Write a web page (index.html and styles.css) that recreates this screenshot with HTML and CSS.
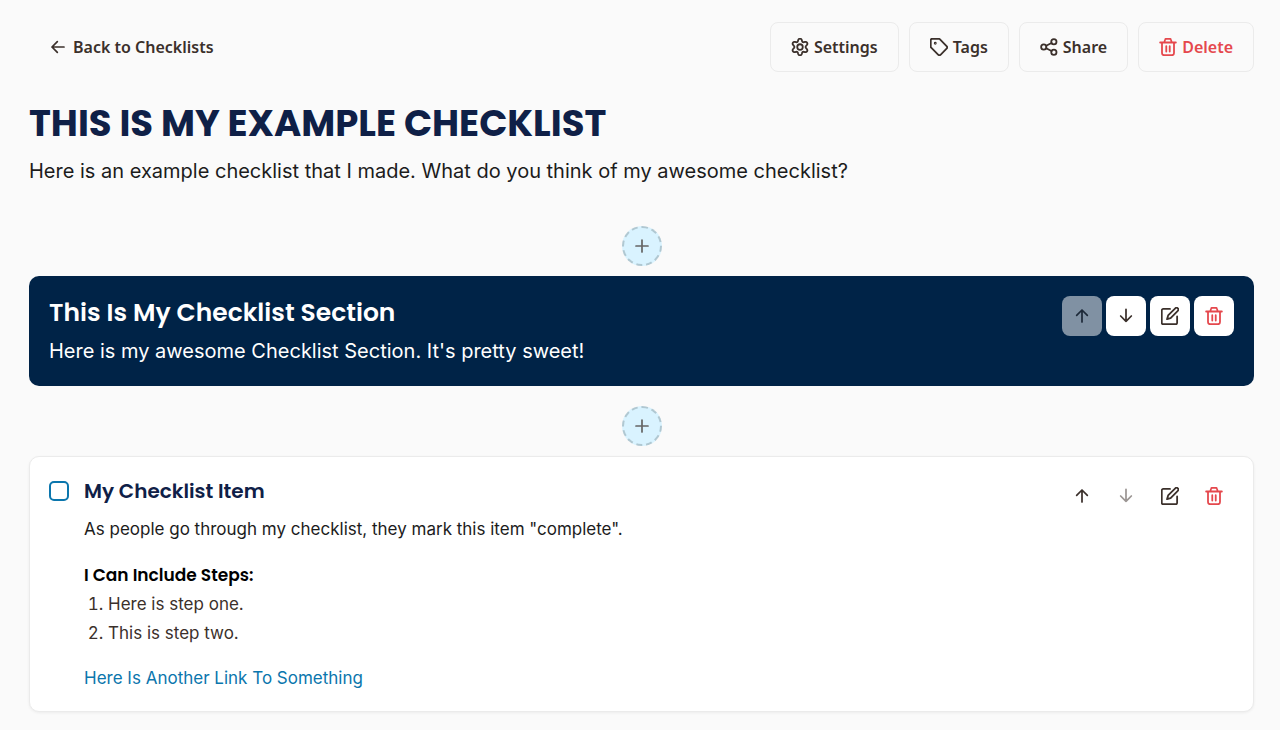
FILE: index.html
```html
<!DOCTYPE html>
<html lang="en">
<head>
    <meta charset="UTF-8">
    <meta name="viewport" content="width=device-width, initial-scale=1.0">
    <title>This Is My Example Checklist</title>
    <link rel="stylesheet" href="styles.css">
</head>
<body>
    <!-- Shared icons -->
    <svg class="icon-defs" aria-hidden="true">
        <symbol id="icon-left" viewBox="0 0 24 24"><path d="M21 12H3M11 20l-8-8 8-8"/></symbol>
        <symbol id="icon-up" viewBox="0 0 24 24"><path d="M12 21V3M4 11l8-8 8 8"/></symbol>
        <symbol id="icon-down" viewBox="0 0 24 24"><path d="M12 2v18M20 12l-8 8-8-8"/></symbol>
        <symbol id="icon-plus" viewBox="0 0 24 24"><path d="M12 3v18M3 12h18"/></symbol>
        <symbol id="icon-settings" viewBox="0 0 24 24">
            <path d="M9.6 2.700a2.500 2.500 0 0 1 4.800 0l.4 1.500a2 2 0 0 0 2.400 1.400l1.600-.4a2.500 2.500 0 0 1 2.400 4.100l-1.100 1.200a2 2 0 0 0 0 3l1.100 1.200a2.500 2.500 0 0 1-2.400 4.100l-1.600-.4a2 2 0 0 0-2.400 1.400l-.4 1.500a2.500 2.500 0 0 1-4.800 0l-.4-1.500a2 2 0 0 0-2.400-1.400l-1.600.4a2.500 2.500 0 0 1-2.400-4.100l1.100-1.200a2 2 0 0 0 0-3L2.800 9.300a2.500 2.500 0 0 1 2.400-4.100l1.600.4a2 2 0 0 0 2.400-1.400z"/>
            <circle cx="12" cy="12" r="3.700"/>
        </symbol>
        <symbol id="icon-tag" viewBox="0 0 24 24">
            <path d="M11.500 1H3a2 2 0 0 0-2 2v8.500a2 2 0 0 0 .6 1.400l9.200 9.200a2.500 2.500 0 0 0 3.500 0l7.800-7.800a2.500 2.500 0 0 0 0-3.500L13 1.600a2 2 0 0 0-1.500-.6z"/>
            <circle cx="7" cy="7" r=".7"/>
        </symbol>
        <symbol id="icon-share" viewBox="0 0 24 24">
            <circle cx="18.500" cy="5" r="3.500"/><circle cx="5" cy="12" r="3.500"/><circle cx="18.500" cy="19" r="3.500"/>
            <path d="M8.200 13.600l7.200 3.800M15.400 6.600l-7.200 3.800"/>
        </symbol>
        <symbol id="icon-trash" viewBox="0 0 24 24">
            <path d="M1.500 6h21M4 6v14a3 3 0 0 0 3 3h10a3 3 0 0 0 3-3V6M7 6l1-3.500A2 2 0 0 1 10 1h4a2 2 0 0 1 2 1.500L17 6M9.700 11v7M14.300 11v7"/>
        </symbol>
        <symbol id="icon-edit" viewBox="0 0 24 24">
            <path d="M12 2.500H3a2 2 0 0 0-2 2V21a2 2 0 0 0 2 2h16.500a2 2 0 0 0 2-2v-8.500"/>
            <path d="M19 1.700a2.400 2.400 0 0 1 3.400 3.400L12.800 14.700 8 16.200l1.500-4.900z"/>
        </symbol>
    </svg>

    <header class="top-bar">
        <a href="#" class="button back-link"><svg class="icon small"><use href="#icon-left"/></svg>Back to Checklists</a>
        <div class="top-buttons">
            <button type="button" class="button"><svg class="icon"><use href="#icon-settings"/></svg>Settings</button>
            <button type="button" class="button"><svg class="icon"><use href="#icon-tag"/></svg>Tags</button>
            <button type="button" class="button"><svg class="icon"><use href="#icon-share"/></svg>Share</button>
            <button type="button" class="button danger"><svg class="icon"><use href="#icon-trash"/></svg>Delete</button>
        </div>
    </header>

    <main>
        <h1>THIS IS MY EXAMPLE CHECKLIST</h1>
        <p class="intro">Here is an example checklist that I made. What do you think of my awesome checklist?</p>

        <button type="button" class="add-button" aria-label="Add above section"><svg class="icon small"><use href="#icon-plus"/></svg></button>

        <section class="checklist-section">
            <div class="section-text">
                <h2>This Is My Checklist Section</h2>
                <p>Here is my awesome Checklist Section. It's pretty sweet!</p>
            </div>
            <div class="actions">
                <button type="button" aria-label="Move up" disabled><svg class="icon small"><use href="#icon-up"/></svg></button>
                <button type="button" aria-label="Move down"><svg class="icon small"><use href="#icon-down"/></svg></button>
                <button type="button" aria-label="Edit"><svg class="icon"><use href="#icon-edit"/></svg></button>
                <button type="button" aria-label="Delete" class="danger"><svg class="icon"><use href="#icon-trash"/></svg></button>
            </div>
        </section>

        <button type="button" class="add-button" aria-label="Add item"><svg class="icon small"><use href="#icon-plus"/></svg></button>

        <article class="checklist-item">
            <input type="checkbox" id="item-check">
            <div class="item-text">
                <h3><label for="item-check">My Checklist Item</label></h3>
                <p>As people go through my checklist, they mark this item "complete".</p>
                <h4>I Can Include Steps:</h4>
                <ol>
                    <li>Here is step one.</li>
                    <li>This is step two.</li>
                </ol>
                <a href="#" class="item-link">Here Is Another Link To Something</a>
            </div>
            <div class="actions">
                <button type="button" aria-label="Move up"><svg class="icon small"><use href="#icon-up"/></svg></button>
                <button type="button" aria-label="Move down" disabled><svg class="icon small"><use href="#icon-down"/></svg></button>
                <button type="button" aria-label="Edit"><svg class="icon"><use href="#icon-edit"/></svg></button>
                <button type="button" aria-label="Delete" class="danger"><svg class="icon"><use href="#icon-trash"/></svg></button>
            </div>
        </article>
    </main>
</body>
</html>
```
FILE: styles.css
```css
* {
    box-sizing: border-box;
}

body {
    margin: 0;
    padding: 22px 26px 16px 29px;
    background-color: #fafafa;
    color: #1c1c1c;
    font-family: Inter, sans-serif;
}

h1, h2, h3, h4, p, ol {
    margin: 0;
}

h1, h2, h3, h4 {
    font-family: Poppins, Inter, sans-serif;
}

button {
    font: inherit;
    cursor: pointer;
}

/* Icons */
.icon-defs {
    position: absolute;
    width: 0;
    height: 0;
}

.icon {
    width: 18px;
    height: 18px;
    flex: none;
    fill: none;
    stroke: currentColor;
    stroke-width: 2.4;
    stroke-linecap: round;
    stroke-linejoin: round;
    overflow: visible;
}

.icon.small {
    width: 16px;
    height: 16px;
    stroke-width: 2.6;
}

/* Top bar */
.top-bar {
    display: flex;
    justify-content: space-between;
    align-items: center;
}

.top-buttons {
    display: flex;
    gap: 10px;
}

.button {
    display: flex;
    align-items: center;
    gap: 5px;
    height: 50px;
    padding: 0 20px;
    border: 1px solid #ebebeb;
    border-radius: 8px;
    background-color: #fafafa;
    color: #3b302b;
    font-family: "Noto Sans", sans-serif;
    font-size: 16px;
    font-weight: 600;
    text-decoration: none;
}

.back-link {
    gap: 7px;
    border-color: transparent;
}

.button.danger, .actions .danger {
    color: #e5484d;
}

/* Heading */
h1 {
    margin-top: 24px;
    color: #0f2047;
    font-size: 37px;
    font-weight: 700;
    line-height: 54px;
}

.intro {
    margin-top: 6px;
    font-size: 20px;
    line-height: 30px;
}

.add-button {
    display: flex;
    align-items: center;
    justify-content: center;
    width: 40px;
    height: 40px;
    margin: 20px auto 10px;
    padding: 0;
    border: 2px dashed #b0c8d2;
    border-radius: 50%;
    background-color: #d9f3ff;
    color: #666;
}

.intro + .add-button {
    margin-top: 40px;
}

/* Section */
.checklist-section, .checklist-item {
    display: flex;
    align-items: flex-start;
    border-radius: 10px;
}

.checklist-section {
    padding: 20px;
    background-color: #002347;
    color: #fff;
}

.section-text, .item-text {
    flex: 1;
}

h2 {
    font-size: 25px;
    font-weight: 600;
    line-height: 34px;
}

.section-text p {
    margin-top: 6px;
    font-size: 20px;
    line-height: 30px;
}

.actions {
    display: flex;
    gap: 4px;
}

.actions button {
    display: flex;
    align-items: center;
    justify-content: center;
    width: 40px;
    height: 40px;
    padding: 0;
    border: none;
    border-radius: 8px;
    background-color: #fff;
    color: #3b302b;
}

.actions button:disabled {
    opacity: 0.5;
    cursor: default;
}

/* Item */
.checklist-item {
    padding: 19px 19px 18px;
    border: 1px solid #ebebeb;
    background-color: #fff;
    box-shadow: 0 1px 3px rgba(0, 0, 0, 0.06);
}

.checklist-item input {
    appearance: none;
    width: 20px;
    height: 20px;
    margin: 5px 15px 0 0;
    border: 2px solid #0b76ad;
    border-radius: 5px;
}

h3 {
    color: #0f2047;
    font-size: 20px;
    font-weight: 600;
    line-height: 30px;
}

.item-text p {
    margin-top: 8px;
    font-size: 17px;
    line-height: 30px;
}

h4 {
    margin-top: 16px;
    color: #000;
    font-size: 17px;
    font-weight: 600;
    line-height: 30px;
}

ol {
    padding-left: 24px;
    color: #3b302b;
    font-size: 17px;
    line-height: 29px;
}

.item-link {
    display: inline-block;
    margin-top: 15px;
    color: #0b76ad;
    font-size: 17px;
    line-height: 30px;
    text-decoration: none;
}
```
